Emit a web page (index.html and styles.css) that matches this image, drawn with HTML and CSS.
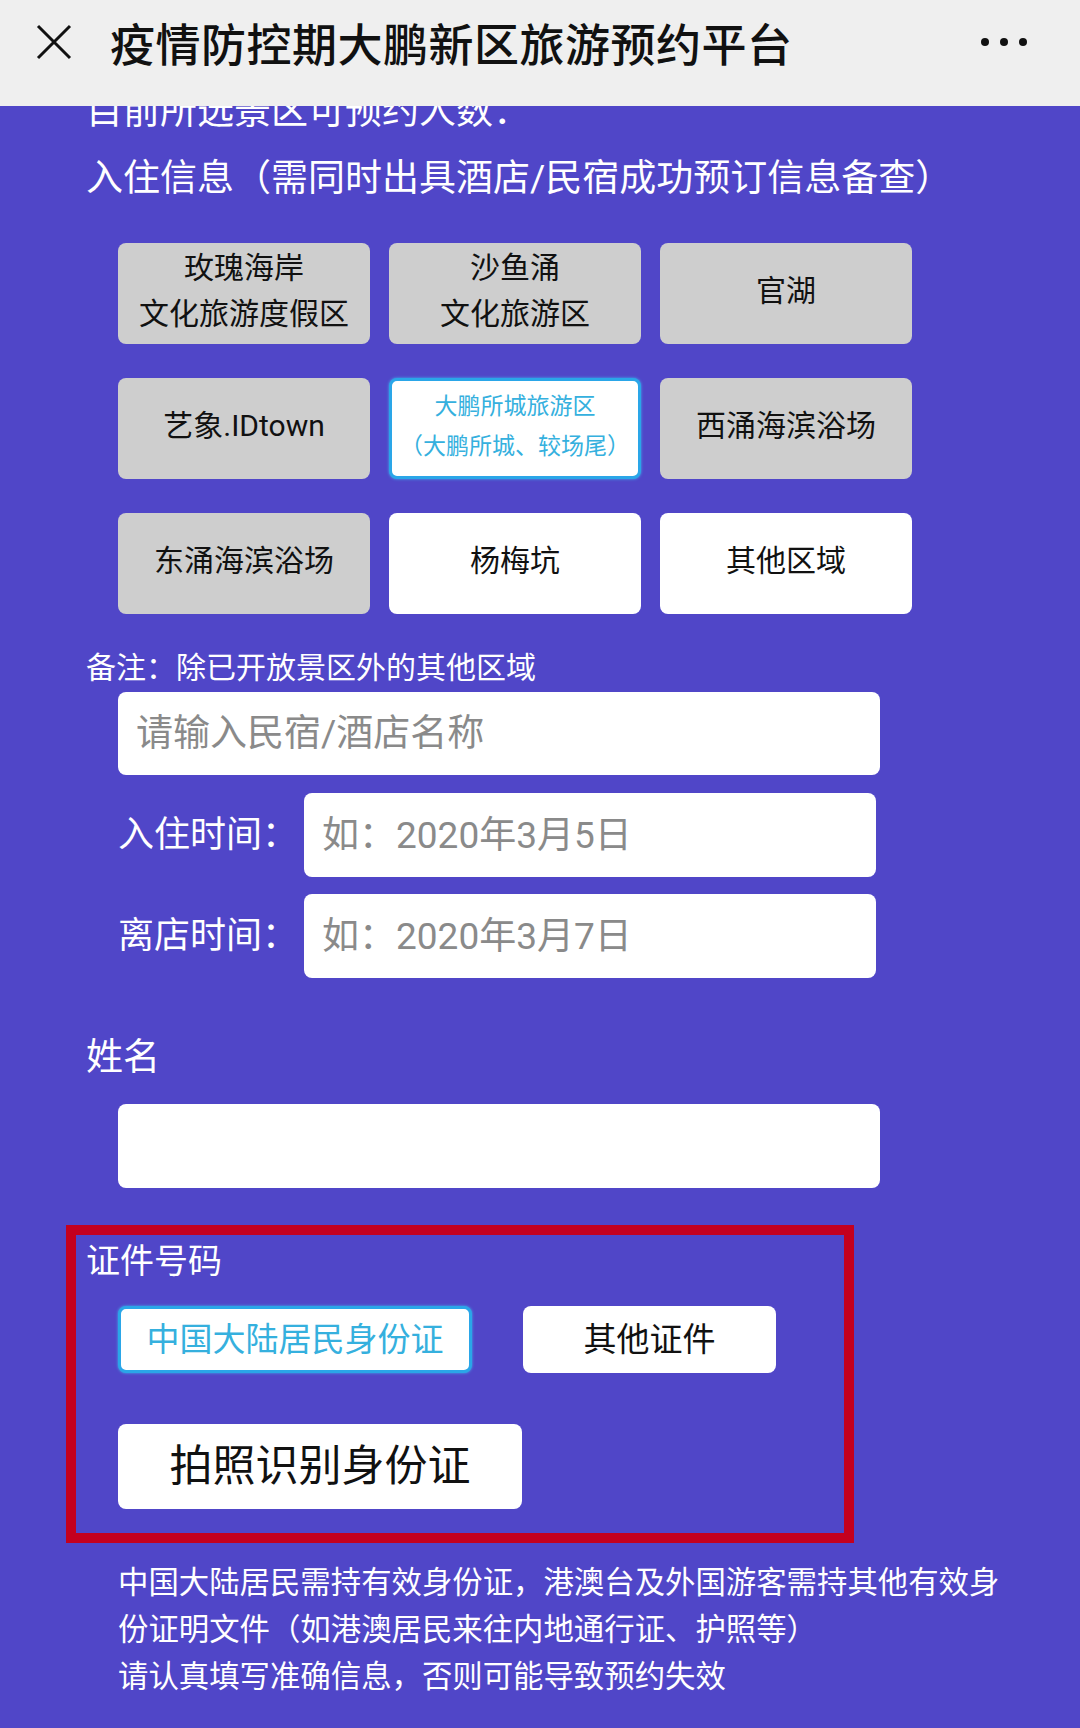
FILE: index.html
```html
<!DOCTYPE html>
<html lang="zh-CN">

    <head>
        <meta charset="utf-8">
        <meta name="viewport" content="width=device-width, initial-scale=1">
        <title>疫情防控期大鹏新区旅游预约平台</title>
        <link rel="stylesheet" href="styles.css">
    </head>

    <body>

        <header class="topbar">
            <svg class="close" viewBox="0 0 36 36" width="36" height="36">
                <path d="M2 2 L34 34 M34 2 L2 34" stroke="#111" stroke-width="3" fill="none" />
            </svg>
            <h1 class="title">疫情防控期大鹏新区旅游预约平台</h1>
            <span class="more"><i></i><i></i><i></i></span>
        </header>

        <main class="page">

            <p class="line line_cut">目前所选景区可预约人数：</p>
            <p class="line">入住信息（需同时出具酒店/民宿成功预订信息备查）</p>

            <div class="spots">
                <button class="spot">玫瑰海岸<br>文化旅游度假区</button>
                <button class="spot">沙鱼涌<br>文化旅游区</button>
                <button class="spot">官湖</button>
                <button class="spot">艺象.IDtown</button>
                <button class="spot spot_on">大鹏所城旅游区<br>（大鹏所城、较场尾）</button>
                <button class="spot">西涌海滨浴场</button>
                <button class="spot">东涌海滨浴场</button>
                <button class="spot spot_open">杨梅坑</button>
                <button class="spot spot_open">其他区域</button>
            </div>

            <p class="remark">备注：除已开放景区外的其他区域</p>
            <input class="field field_hotel" type="text" placeholder="请输入民宿/酒店名称" />

            <div class="date_row">
                <label class="date_label">入住时间：</label>
                <input class="field field_date" type="text" placeholder="如：2020年3月5日" />
            </div>
            <div class="date_row">
                <label class="date_label">离店时间：</label>
                <input class="field field_date" type="text" placeholder="如：2020年3月7日" />
            </div>

            <p class="line line_name">姓名</p>
            <input class="field field_name" type="text" />

            <section class="id_box">
                <p class="id_title">证件号码</p>
                <div class="id_types">
                    <button class="id_type id_on">中国大陆居民身份证</button>
                    <button class="id_type id_other">其他证件</button>
                </div>
                <button class="photo">拍照识别身份证</button>
            </section>

            <p class="notes">中国大陆居民需持有效身份证，港澳台及外国游客需持其他有效身份证明文件（如港澳居民来往内地通行证、护照等）</p>
            <p class="notes notes_last">请认真填写准确信息，否则可能导致预约失效</p>

        </main>

    </body>

</html>
```

FILE: styles.css
```css
body {
    margin: 0;
    width: 1080px;
    height: 1728px;
    overflow: hidden;
    background: #5046c8;
    font-family: Roboto, "Noto Sans CJK SC", sans-serif;
    color: #fff;
}

p {
    margin: 0;
}

button, input {
    font-family: Roboto, "Noto Sans CJK SC", sans-serif;
    border: none;
    outline: none;
    margin: 0;
}

/* top bar of the in-app browser */
.topbar {
    position: relative;
    z-index: 2;
    height: 106px;
    display: flex;
    align-items: center;
    background: #efefef;
    color: #111;
}

.close {
    margin-left: 36px;
    margin-top: -22px;
    flex: none;
}

.title {
    margin: -22px 0 0 38px;
    font-size: 45px;
    font-weight: 500;
    letter-spacing: 0.5px;
    flex: 1;
}

.more {
    display: flex;
    gap: 11px;
    margin-right: 53px;
    margin-top: -22px;
}

.more i {
    width: 8px;
    height: 8px;
    border-radius: 50%;
    background: #111;
}

/* page body */
.page {
    position: relative;
    z-index: 1;
    padding-left: 86px;
}

.line {
    font-size: 37px;
    line-height: 48px;
}

.line_cut {
    margin-top: -18px;
    position: relative;
    z-index: -1;
}

.line_cut + .line {
    margin-top: 19px;
}

.spots {
    display: grid;
    grid-template-columns: repeat(3, 252px);
    grid-auto-rows: 101px;
    column-gap: 19px;
    row-gap: 34px;
    margin: 40px 0 0 32px;
}

.spot {
    background: #cecece;
    border-radius: 8px;
    color: #111;
    font-size: 30px;
    line-height: 46px;
    padding: 0 0 5px;
}

.spot_open {
    background: #fff;
}

.spot_on {
    background: #fff;
    border: 3px solid #2aa6e8;
    box-shadow: 0 0 3px #3fb6f0;
    color: #35b0de;
    font-size: 23px;
    line-height: 40px;
    padding-bottom: 4px;
}

.remark {
    margin-top: 34px;
    font-size: 30px;
    line-height: 40px;
}

.field {
    display: block;
    box-sizing: border-box;
    background: #fff;
    border-radius: 8px;
    font-size: 37px;
    color: #222;
    padding: 0 18px;
}

.field::placeholder {
    color: #8a8a8a;
}

.field_hotel {
    margin: 4px 0 0 32px;
    width: 762px;
    height: 83px;
}

.date_row {
    display: flex;
    align-items: center;
    margin: 18px 0 0 32px;
}

.date_row + .date_row {
    margin-top: 17px;
}

.date_label {
    width: 186px;
    font-size: 36px;
    line-height: 48px;
}

.field_date {
    width: 572px;
    height: 84px;
}

.line_name {
    margin-top: 56px;
}

.field_name {
    margin: 22px 0 0 32px;
    width: 762px;
    height: 84px;
}

/* id block, outlined in red */
.id_box {
    box-sizing: border-box;
    width: 788px;
    margin: 37px 0 0 -20px;
    border: 10px solid #c4001f;
    padding: 4px 0 24px 10px;
}

.id_title {
    font-size: 34px;
    line-height: 44px;
}

.id_types {
    display: flex;
    gap: 51px;
    margin: 23px 0 0 32px;
}

.id_type {
    height: 67px;
    background: #fff;
    border-radius: 8px;
    font-size: 33px;
    color: #111;
    padding: 0 0 6px;
}

.id_on {
    width: 354px;
    border: 3px solid #2aa6e8;
    box-shadow: 0 0 3px #3fb6f0;
    color: #35b0de;
}

.id_other {
    width: 253px;
}

.photo {
    display: block;
    width: 404px;
    height: 85px;
    margin: 51px 0 0 32px;
    background: #fff;
    border-radius: 8px;
    font-size: 43px;
    color: #111;
    padding: 0 0 9px;
}

.notes {
    width: 890px;
    margin: 16px 0 0 32px;
    font-size: 30.4px;
    line-height: 47px;
}

.notes_last {
    margin-top: 0;
}
```
